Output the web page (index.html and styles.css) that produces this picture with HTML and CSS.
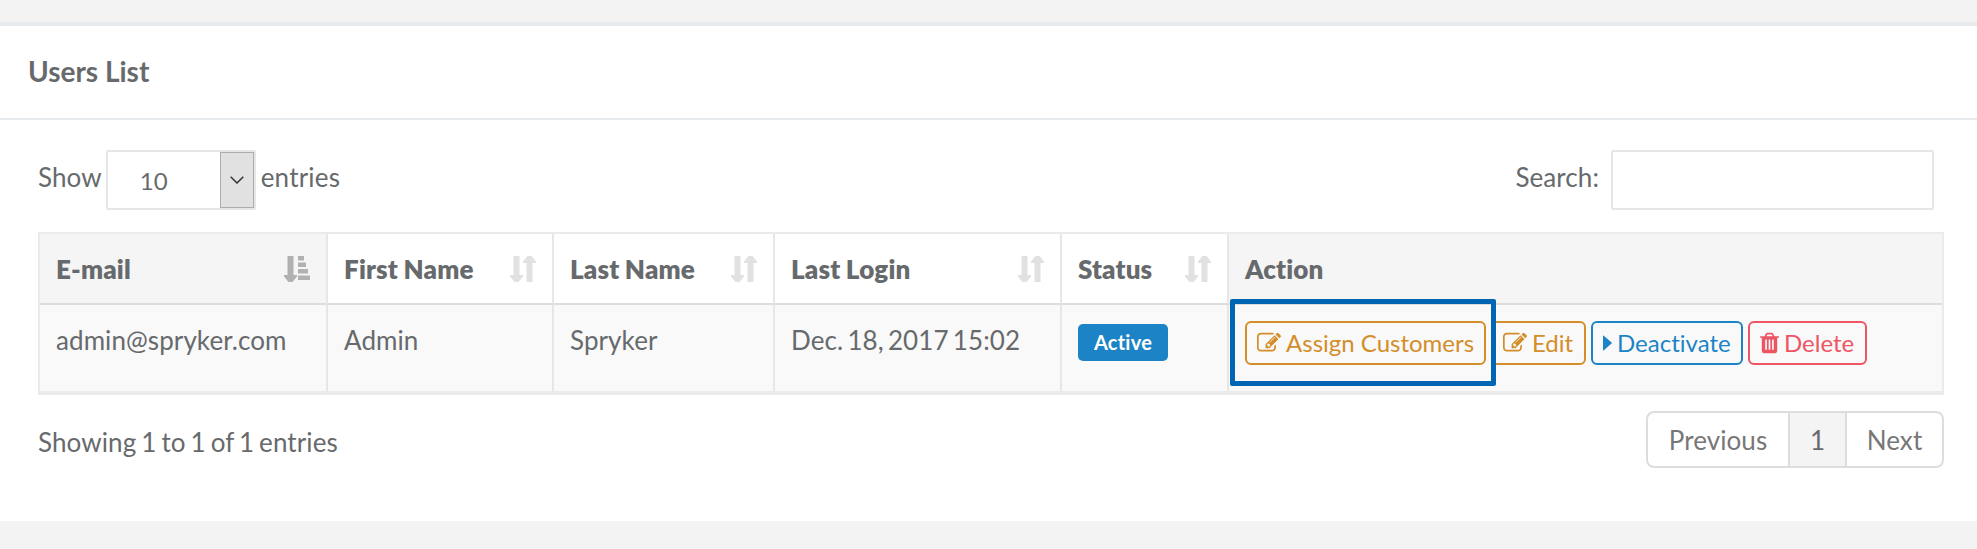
FILE: index.html
```html
<!DOCTYPE html>
<html lang="en">
<head>
<meta charset="utf-8">
<title>Users List</title>
<link rel="stylesheet" href="styles.css">
</head>
<body>
<svg class="sprite" aria-hidden="true">
  <symbol id="sort" viewBox="0 0 26 26"><path d="M3.5 0h6v19H13v1.500L8.500 26h-4L0 20.500V19h3.500zM16.500 26h6V7H26V5.500L21.500 0h-4L13 5.500V7h3.500z"/></symbol>
  <symbol id="sort-asc" viewBox="0 0 26 26"><path d="M3.500 0h6v19H13v1.500L8.500 26h-4L0 20.500V19h3.500zM14 0h6v4.500h-6zM14 6.500h8V11h-8zM14 13h10v4.500H14zM14 19.500h12V24H14z"/></symbol>
  <symbol id="edit" viewBox="0 0 1792 1792"><path d="M888 1184l116-116-152-152-116 116v56h96v96h56zm440-720q-16-16-33 1l-350 350q-17 17-1 33t33-1l350-350q17-17 1-33zm80 594v190q0 119-84.500 203.500t-203.500 84.500h-832q-119 0-203.500-84.500t-84.500-203.500v-832q0-119 84.500-203.500t203.500-84.500h832q63 0 117 25 15 7 18 23 3 17-9 29l-49 49q-14 14-32 8-23-6-45-6h-832q-66 0-113 47t-47 113v832q0 66 47 113t113 47h832q66 0 113-47t47-113v-126q0-13 9-22l64-64q15-15 35-7t20 29zm-96-738l288 288-672 672h-288v-288zm444 132l-92 92-288-288 92-92q28-28 68-28t68 28l152 152q28 28 28 68t-28 68z"/></symbol>
  <symbol id="trash" viewBox="192 0 1408 1792"><path d="M704 1376v-704q0-14-9-23t-23-9h-64q-14 0-23 9t-9 23v704q0 14 9 23t23 9h64q14 0 23-9t9-23zm256 0v-704q0-14-9-23t-23-9h-64q-14 0-23 9t-9 23v704q0 14 9 23t23 9h64q14 0 23-9t9-23zm256 0v-704q0-14-9-23t-23-9h-64q-14 0-23 9t-9 23v704q0 14 9 23t23 9h64q14 0 23-9t9-23zm-544-992h448l-48-117q-7-9-17-11h-317q-10 2-17 11zm928 32v64q0 14-9 23t-23 9h-96v948q0 83-47 143.500t-113 60.500h-832q-66 0-113-58.500t-47-141.500v-952h-96q-14 0-23-9t-9-23v-64q0-14 9-23t23-9h309l70-167q15-37 54-63t79-26h320q40 0 79 26t54 63l70 167h309q14 0 23 9t9 23z"/></symbol>
  <symbol id="caret" viewBox="0 0 9 24"><path d="M0 5v14q0 1 .8.300l7.800-6.700q.6-.6 0-1.200L.8 4.700Q0 4 0 5z"/></symbol>
</svg>
<section class="panel">
  <header class="panel-title"><h5>Users List</h5></header>
  <div class="panel-body">
    <div class="toolbar">
      <div class="length">
        <span>Show</span>
        <div class="select"><span class="value">10</span><span class="arrow"><svg width="14" height="8" viewBox="0 0 14 8"><path d="M.7.700 7 7 13.300.700"/></svg></span></div>
        <span class="unit">entries</span>
      </div>
      <label class="search">Search:<input type="text"></label>
    </div>
    <div class="table">
      <div class="row head">
        <div class="cell shaded">E-mail<svg class="sort active"><use href="#sort-asc"/></svg></div>
        <div class="cell">First Name<svg class="sort"><use href="#sort"/></svg></div>
        <div class="cell">Last Name<svg class="sort"><use href="#sort"/></svg></div>
        <div class="cell">Last Login<svg class="sort"><use href="#sort"/></svg></div>
        <div class="cell">Status<svg class="sort"><use href="#sort"/></svg></div>
        <div class="cell shaded">Action</div>
      </div>
      <div class="row data">
        <div class="cell">admin@spryker.com</div>
        <div class="cell">Admin</div>
        <div class="cell">Spryker</div>
        <div class="cell date">Dec. 18, 2017 15:02</div>
        <div class="cell"><span class="badge">Active</span></div>
        <div class="cell actions">
          <a class="btn warning assign"><svg class="icon"><use href="#edit"/></svg>Assign Customers<span class="highlight"></span></a>
          <a class="btn warning edit"><svg class="icon"><use href="#edit"/></svg>Edit</a>
          <a class="btn info deactivate"><svg class="icon caret"><use href="#caret"/></svg>Deactivate</a>
          <a class="btn danger delete"><svg class="icon trash"><use href="#trash"/></svg>Delete</a>
        </div>
      </div>
    </div>
    <footer class="footer">
      <div class="summary">Showing 1 to 1 of 1 entries</div>
      <div class="pagination"><a class="prev">Previous</a><a class="page">1</a><a class="next">Next</a></div>
    </footer>
  </div>
</section>
</body>
</html>
```

FILE: styles.css
```css
* { box-sizing: border-box; }
body {
  margin: 0;
  padding-top: 22px;
  height: 549px;
  overflow: hidden;
  background: #f3f3f4;
  color: #676a6c;
  font: 26px/37px Lato, sans-serif;
  font-variant-ligatures: none;
}
.sprite { display: none; }
.panel { height: 499px; background: #fff; border-top: 4px solid #e7eaec; }
.panel-title { height: 94px; padding: 28px 28px 0; border-bottom: 2px solid #e7eaec; }
.panel-title h5 { margin: 0; font-size: 28px; line-height: 34px; font-weight: 700; }
.panel-body { padding: 30px 33px 0 38px; letter-spacing: .08px; }
.toolbar { display: flex; justify-content: space-between; height: 82px; padding-right: 10px; }
.length, .search { display: flex; align-items: flex-start; line-height: 54px; }
.length { gap: 4px; }
.unit { padding-left: 1px; letter-spacing: .2px; }
.select { display: flex; justify-content: space-between; width: 150px; height: 60px; border: 2px solid #e5e6e7; border-radius: 2px; font-size: 24px; line-height: 58px; }
.value { padding-left: 32px; }
.arrow { display: flex; align-items: center; justify-content: center; width: 34px; height: 56px; background: #e1e1e1; border: 1px solid #adadad; }
.arrow svg { fill: none; stroke: #333; stroke-width: 1.500; }
.search { gap: 12px; }
.search input { width: 323px; height: 60px; padding: 0 12px; border: 2px solid #e5e6e7; border-radius: 2px; background: #fff; font: inherit; }
.table { height: 163px; border: 2px solid #ebebeb; border-bottom-width: 4px; }
.row { display: grid; grid-template-columns: 288px 226px 221px 287px 167px 1fr; }
.cell { padding: 17px 16px 15px; border-right: 2px solid #e7e7e7; white-space: nowrap; }
.cell:last-child { border-right: 0; }
.head { height: 71px; font-weight: 800; letter-spacing: .15px; word-spacing: -.6px; }
.head .cell { display: flex; justify-content: space-between; border-bottom: 2px solid #ddd; }
.shaded { background: #f5f5f6; }
.sort { width: 26px; height: 26px; margin-top: 5px; fill: #e1e1e1; }
.sort.active { fill: #b1b1b2; }
.data { height: 86px; background: #f9f9f9; }
.date { letter-spacing: .1px; word-spacing: -2.600px; }
.badge { display: block; width: 90px; height: 37px; margin-top: 2px; border-radius: 5px; background: #1c84c6; color: #fff; font-size: 20px; font-weight: 700; letter-spacing: .25px; line-height: 37px; text-align: center; }
.actions { display: flex; gap: 5px; padding-top: 16px; letter-spacing: 0; }
.btn { position: relative; display: flex; height: 44px; padding-left: 10px; border: 2px solid; border-radius: 6px; font-size: 24px; line-height: 39px; }
.warning { color: #d38e29; }
.info { color: #1c84c6; }
.danger { color: #ed5565; }
.assign { width: 241px; }
.edit { width: 95px; }
.deactivate { width: 152px; }
.delete { width: 119px; }
.icon { flex: none; width: 24px; height: 24px; margin: 8px 5px 0 0; fill: currentColor; }
.icon.caret { width: 9px; }
.icon.trash { width: 19px; }
.highlight { position: absolute; z-index: 1; left: -17px; top: -24px; width: 266px; height: 87px; border: 5px solid #0066b3; border-radius: 2px; }
.footer { display: flex; justify-content: space-between; padding-top: 16px; }
.summary { padding-top: 13px; letter-spacing: .1px; word-spacing: -1.800px; }
.pagination { display: flex; width: 298px; height: 57px; border: 2px solid #ddd; border-radius: 8px; overflow: hidden; line-height: 54px; text-align: center; color: #777; }
.prev { width: 140px; }
.page { width: 59px; border: solid #ddd; border-width: 0 2px; background: #f4f4f4; color: #676a6c; }
.next { flex: 1; }
```
